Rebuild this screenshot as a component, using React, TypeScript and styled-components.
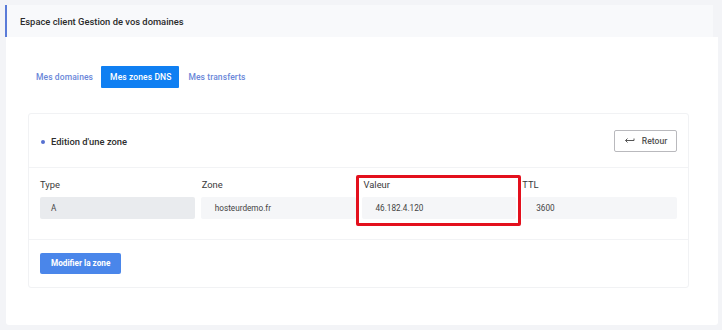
import React from "react";
import styled, { createGlobalStyle } from "styled-components";

const GlobalStyle = createGlobalStyle`
  html, body {
    margin: 0;
    padding: 0;
    background: #f3f4f7;
  }
  body {
    font-family: Roboto, "Liberation Sans", sans-serif;
    color: #333;
  }
`;

const Page = styled.div`
  width: 722px;
  height: 330px;
  padding: 5px 4px 5px 5px;
  box-sizing: border-box;
  display: flex;
  flex-direction: column;
`;

const Header = styled.div`
  height: 32px;
  background: #f8f9fb;
  border-left: 2px solid #5a7bd8;
  margin-right: 5px;
  display: flex;
  align-items: center;
  padding-left: 13px;
  font-size: 9.4px;
  font-weight: 500;
  color: #2b2b2b;
`;

const Main = styled.div`
  flex: 1;
  background: #fff;
  margin-left: 1px;
  padding: 29px 29px 0 22px;
  border-radius: 0 0 3px 3px;
`;

const Tabs = styled.div`
  display: flex;
  align-items: center;
  margin-left: 8px;
`;

const Tab = styled.div<{ $active?: boolean }>`
  height: 22px;
  display: flex;
  align-items: center;
  padding: 0 8px 0 9px;
  font-size: 8.5px;
  font-weight: 500;
  letter-spacing: 0.1px;
  color: ${(p) => (p.$active ? "#fff" : "#6a87d9")};
  background: ${(p) => (p.$active ? "#0f7ff2" : "transparent")};
  border-radius: 1px;
  &:first-child {
    padding-left: 0;
  }
`;

const Card = styled.div`
  margin-top: 25px;
  border: 1px solid #f1f2f4;
  border-radius: 3px;
  height: 175px;
  box-sizing: border-box;
  display: flex;
  flex-direction: column;
`;

const CardHead = styled.div`
  height: 54px;
  border-bottom: 1px solid #f2f3f5;
  display: flex;
  align-items: center;
  justify-content: space-between;
  padding: 2px 11px 0 12px;
  box-sizing: border-box;
`;

const CardTitle = styled.div`
  display: flex;
  align-items: center;
  gap: 6px;
  font-size: 9.4px;
  font-weight: 500;
  color: #2e2e2e;
`;

const Dot = styled.span`
  width: 4px;
  height: 4px;
  border-radius: 50%;
  background: #5670d0;
`;

const BackButton = styled.div`
  width: 63px;
  height: 22px;
  box-sizing: border-box;
  border: 1px solid #b9b9bd;
  border-radius: 2px;
  display: flex;
  align-items: center;
  justify-content: center;
  gap: 7px;
  font-size: 8.6px;
  font-weight: 500;
  color: #555;
  margin-top: -2px;
`;

const Fields = styled.div`
  position: relative;
  display: grid;
  grid-template-columns: repeat(4, 1fr);
  column-gap: 6px;
  padding: 11px 11px 0 11px;
  height: 72px;
  box-sizing: border-box;
  border-bottom: 1px solid #f2f3f5;
`;

const Field = styled.div`
  display: flex;
  flex-direction: column;
  gap: 6px;
`;

const Label = styled.div<{ $shift?: number }>`
  font-size: 9.4px;
  color: #3a3a3a;
  padding-left: ${(p) => p.$shift ?? 0}px;
  height: 12px;
  line-height: 12px;
`;

const Input = styled.div<{ $disabled?: boolean }>`
  height: 22px;
  background: ${(p) => (p.$disabled ? "#e9ebee" : "#f5f6f8")};
  border-radius: 2px;
  display: flex;
  align-items: center;
  padding-left: ${(p) => (p.$disabled ? "11px" : "14px")};
  font-size: 8.2px;
  color: #444;
`;

const Highlight = styled.div`
  position: absolute;
  left: 327px;
  top: 7px;
  width: 165px;
  height: 51px;
  box-sizing: border-box;
  border: 3px solid #e3101d;
  border-radius: 2px;
  pointer-events: none;
`;

const CardFoot = styled.div`
  padding: 11px 11px;
`;

const SubmitButton = styled.div`
  display: inline-flex;
  align-items: center;
  height: 21px;
  padding: 0 11px;
  background: #4a86ea;
  border-radius: 2px;
  color: #fff;
  font-size: 8.2px;
  font-weight: 700;
`;

const ReturnIcon = () => (
  <svg width="11" height="7" viewBox="0 0 11 7" fill="none">
    <path d="M10 1.5 V3.5 H1.5" stroke="#555" strokeWidth="1" />
    <path d="M3.5 1.5 L1.5 3.5 L3.5 5.5" stroke="#555" strokeWidth="1" />
  </svg>
);

export default function App() {
  return (
    <>
      <GlobalStyle />
      <Page>
        <Header>Espace client Gestion de vos domaines</Header>
        <Main>
          <Tabs>
            <Tab>Mes domaines</Tab>
            <Tab $active>Mes zones DNS</Tab>
            <Tab>Mes transferts</Tab>
          </Tabs>
          <Card>
            <CardHead>
              <CardTitle>
                <Dot />
                Edition d'une zone
              </CardTitle>
              <BackButton>
                <ReturnIcon />
                Retour
              </BackButton>
            </CardHead>
            <Fields>
              <Field>
                <Label>Type</Label>
                <Input $disabled>A</Input>
              </Field>
              <Field>
                <Label $shift={1}>Zone</Label>
                <Input>hosteurdemo.fr</Input>
              </Field>
              <Field>
                <Label $shift={2}>Valeur</Label>
                <Input>46.182.4.120</Input>
              </Field>
              <Field>
                <Label $shift={-2}>TTL</Label>
                <Input>3600</Input>
              </Field>
              <Highlight />
            </Fields>
            <CardFoot>
              <SubmitButton>Modifier la zone</SubmitButton>
            </CardFoot>
          </Card>
        </Main>
      </Page>
    </>
  );
}
